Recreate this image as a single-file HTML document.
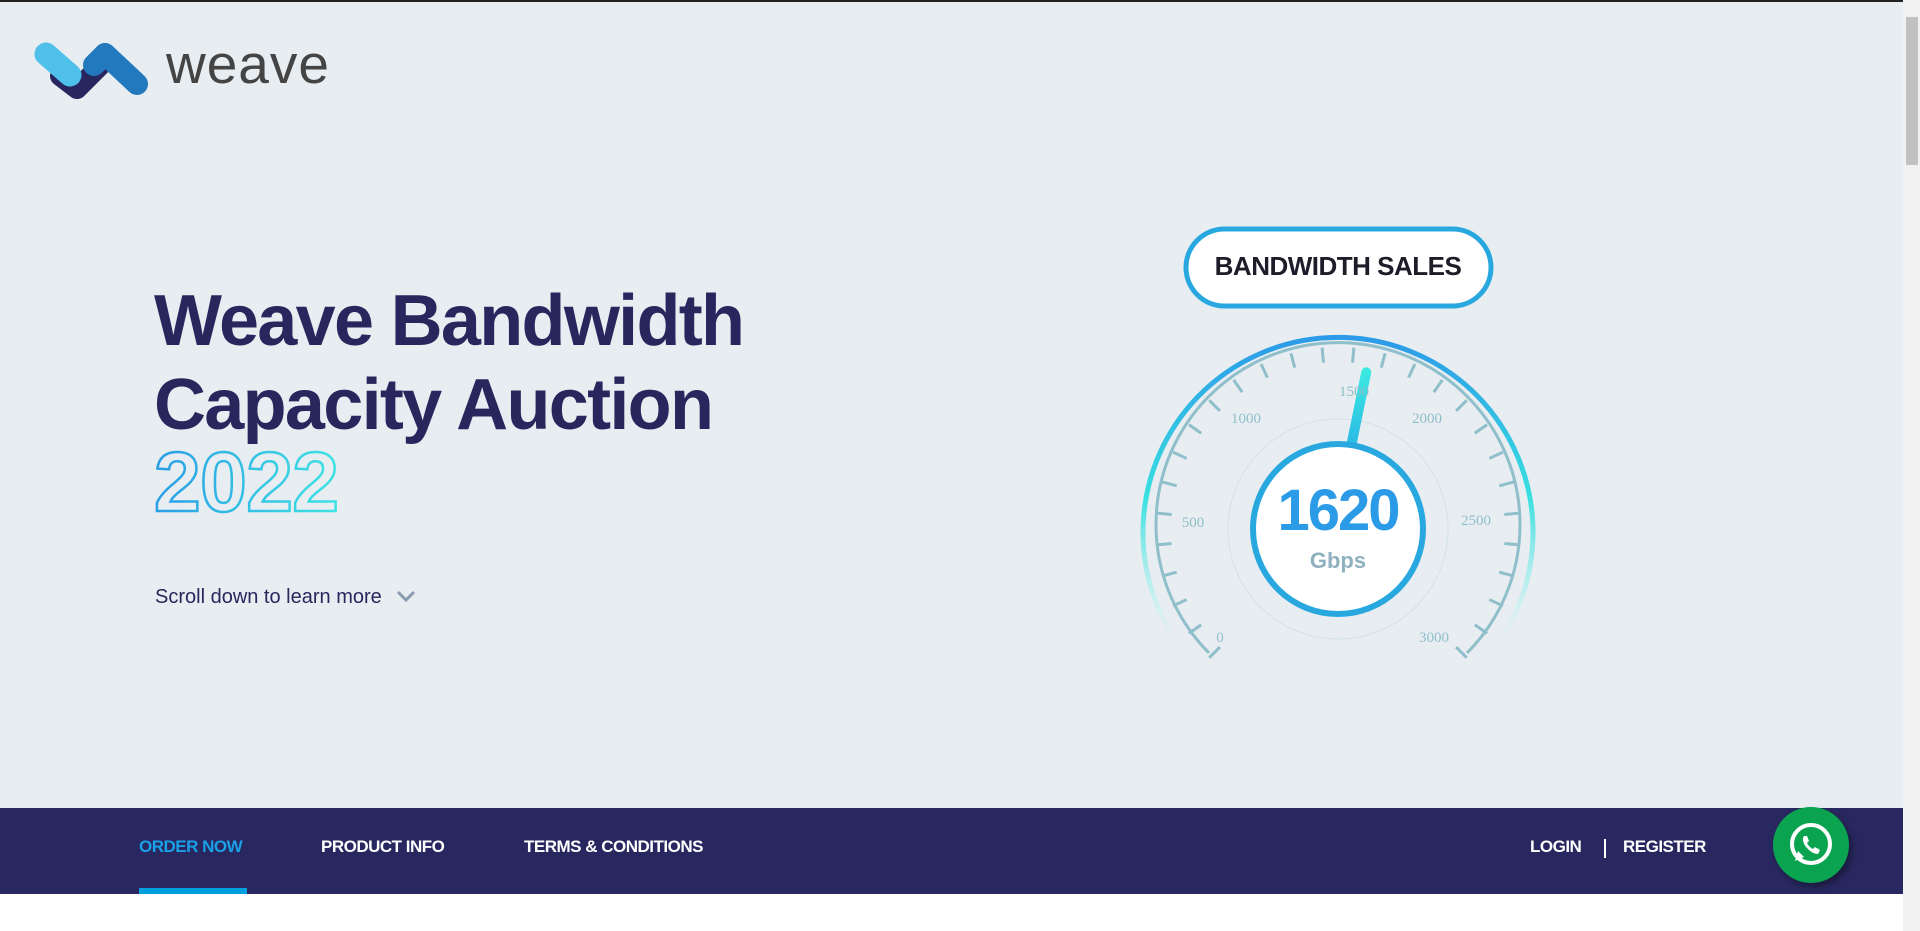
<!DOCTYPE html>
<html><head><meta charset="utf-8"><style>
*{margin:0;padding:0;box-sizing:border-box}
body{width:1920px;height:931px;overflow:hidden;background:#fff;font-family:"Liberation Sans",sans-serif;position:relative}
.hero{position:absolute;left:0;top:0;width:1903px;height:808px;background:#e8edf1;border-top:2px solid #222}
.logo{position:absolute;left:30px;top:36px}
.wtext{position:absolute;left:166px;top:30px;font-size:55px;color:#444;letter-spacing:1px}
h1{position:absolute;left:154px;top:277px;font-size:72px;line-height:84px;color:#27275e;font-weight:bold;letter-spacing:-1.7px}
.y{position:absolute;left:153px;top:440px}
.scroll{position:absolute;left:155px;top:584px;font-size:20px;color:#27275e}
.nav{position:absolute;left:0;top:808px;width:1903px;height:86px;background:#28275f}
.nav a{position:absolute;top:29px;font-size:17px;font-weight:bold;color:#fff;letter-spacing:-0.5px}
.sb{position:absolute;right:0;top:0;width:17px;height:931px;background:#f1f1f1}
.sb div{position:absolute;left:3px;top:17px;width:12px;height:148px;background:#c1c1c1}
</style></head><body>
<div class="hero">
<svg class="logo" width="120" height="62" viewBox="30 36 120 62">
<polyline points="60,74 77,87 101,63" fill="none" stroke="#28265f" stroke-width="20" stroke-linejoin="round" stroke-linecap="round"/>
<line x1="46" y1="52" x2="70" y2="73" stroke="#4fc0ea" stroke-width="23" stroke-linecap="round"/>
<line x1="105" y1="52" x2="137" y2="82" stroke="#2279bd" stroke-width="22" stroke-linecap="round"/>
<line x1="94" y1="63" x2="105" y2="52" stroke="#2279bd" stroke-width="22" stroke-linecap="round"/>
</svg>
<div class="wtext">weave</div>
<h1>Weave Bandwidth<br>Capacity Auction</h1>
<svg class="y" width="210" height="75"><defs><linearGradient id="yg"><stop offset="0" stop-color="#2a9de6"/><stop offset="1" stop-color="#3ee3e3"/></linearGradient></defs>
<text x="1" y="69" font-family="Liberation Sans" font-weight="bold" font-size="84" fill="none" stroke="url(#yg)" stroke-width="2.5" letter-spacing="-1" textLength="184">2022</text></svg>
<div class="scroll">Scroll down to learn more <svg width="22" height="14" style="margin-left:8px"><polyline points="3,3 11,11 19,3" fill="none" stroke="#8a9bb0" stroke-width="3"/></svg></div>
<svg style="position:absolute;left:1120px;top:210px" width="450" height="460" viewBox="1120 210 450 460">
<defs><linearGradient id="ag" x1="0" y1="0" x2="0" y2="1"><stop offset="0" stop-color="#2c9ae8"/><stop offset="0.5" stop-color="#38e0e0"/><stop offset="0.85" stop-color="#c8f2f2" stop-opacity=".6"/><stop offset="1" stop-color="#e8edf1" stop-opacity="0"/></linearGradient>
<linearGradient id="ng" x1="0" y1="1" x2="0" y2="0"><stop offset="0" stop-color="#2ab5e5"/><stop offset="1" stop-color="#3ae8e0"/></linearGradient></defs>
<rect x="1186" y="227" width="305" height="77" rx="38.5" fill="#fff" stroke="#29a8e0" stroke-width="5"/>
<text x="1338" y="273" text-anchor="middle" font-size="26" font-weight="bold" fill="#1d1d2a" font-family="Liberation Sans" letter-spacing="-0.5">BANDWIDTH SALES</text>
<path d="M1188,655 A195,195 0 1 1 1488,655" fill="none" stroke="url(#ag)" stroke-width="5"/>
<path d="M1209,651 A182,182 0 1 1 1467,651" fill="none" stroke="#8fbfca" stroke-width="3"/>
<g stroke="#8fbfca" stroke-width="3" id="ticks"></g>
<circle cx="1338" cy="527" r="110" fill="none" stroke="#d2e2ec" stroke-width="1"/>
<line x1="1347" y1="450" x2="1369" y2="371" stroke="url(#ng)" stroke-width="10" stroke-linecap="round" transform="rotate(-4 1358 410)"/>
<circle cx="1338" cy="527" r="85" fill="#fff" stroke="#29a8e0" stroke-width="6"/>
<text x="1338" y="528" text-anchor="middle" font-size="58" font-weight="bold" fill="#2b9be8" letter-spacing="-2">1620</text>
<text x="1338" y="566" text-anchor="middle" font-size="22" font-weight="bold" fill="#8fb0bf">Gbps</text>
<g font-family="Liberation Serif" font-size="15" fill="#8fbfca" text-anchor="middle">
<text x="1220" y="640">0</text><text x="1193" y="525">500</text><text x="1246" y="421">1000</text><text x="1354" y="394">1500</text><text x="1427" y="421">2000</text><text x="1476" y="523">2500</text><text x="1434" y="640">3000</text></g>
</svg>
</div>
<div class="nav">
<a style="left:139px;color:#1aa0e6">ORDER NOW</a>
<a style="left:321px">PRODUCT INFO</a>
<a style="left:524px">TERMS &amp; CONDITIONS</a>
<a style="left:1530px">LOGIN</a>
<div style="position:absolute;left:1604px;top:31px;width:2px;height:19px;background:#fff"></div>
<a style="left:1623px">REGISTER</a>
<div style="position:absolute;left:139px;top:80px;width:108px;height:6px;background:#00a0e0"></div>
</div>
<div style="position:absolute;left:1773px;top:807px;width:76px;height:76px;border-radius:50%;background:#0aa451;box-shadow:3px 4px 6px rgba(0,0,0,.35)">
<svg width="76" height="76" viewBox="0 0 76 76"><circle cx="38" cy="37" r="19" fill="none" stroke="#fff" stroke-width="4"/><path d="M22,54 L25,44 L31,50Z" fill="#fff"/><path d="M31,29 q-3,4 2,11 q6,7 12,7 l2,-4 l-5,-3 l-2,2 q-4,-2 -6,-6 l2,-2 l-2,-5z" fill="#fff"/></svg></div>
<div class="sb"><div></div></div>
<script>
var g=document.getElementById('ticks'),s='';
for(var i=0;i<=27;i++){var a=(-135+i*10)*Math.PI/180,r1=182,r2=167;
s+='<line x1="'+(1338+r1*Math.sin(a))+'" y1="'+(527-r1*Math.cos(a))+'" x2="'+(1338+r2*Math.sin(a))+'" y2="'+(527-r2*Math.cos(a))+'"/>';}
g.innerHTML=s;
</script>
</body></html>
